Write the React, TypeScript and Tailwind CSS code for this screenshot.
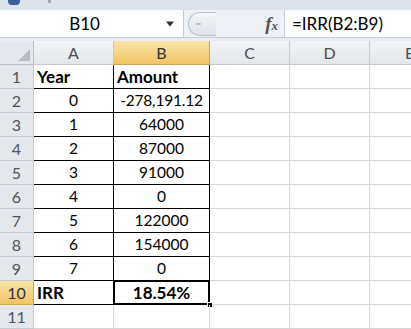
import React from 'react';

const cols = [
  { key: 'A', w: 'w-[80px]' },
  { key: 'B', w: 'w-[96px]' },
  { key: 'C', w: 'w-[80px]' },
  { key: 'D', w: 'w-[80px]' },
  { key: 'E', w: 'w-[80px]' },
];

const data: [string, string][] = [
  ['Year', 'Amount'],
  ['0', '-278,191.12'],
  ['1', '64000'],
  ['2', '87000'],
  ['3', '91000'],
  ['4', '0'],
  ['5', '122000'],
  ['6', '154000'],
  ['7', '0'],
  ['IRR', '18.54%'],
  ['', ''],
];

function FxIcon() {
  return (
    <span className="italic font-bold text-[19px] text-[#555] leading-none" style={{ fontFamily: '"Liberation Serif", serif' }}>
      f<span className="text-[13px]">x</span>
    </span>
  );
}

export default function App() {
  return (
    <div className="w-[411px] h-[329px] overflow-hidden bg-white text-black" style={{ fontFamily: 'Lato, "Open Sans", sans-serif' }}>
      {/* ribbon leftover */}
      <div className="h-[10px] bg-[#dde3ea] flex items-start pl-[8px]">
        <div className="w-[12px] h-[5px] bg-[#3b5f9c] rounded-b-sm" />
        <div className="ml-[28px] w-[3px] h-[3px] bg-[#9aa6b6]" />
      </div>

      {/* formula bar */}
      <div className="h-[28px] flex bg-[#e9edf2] border-b border-[#c6ccd4]">
        <div className="w-[184px] bg-white flex items-center border-r border-[#c6ccd4]">
          <div className="flex-1 text-center text-[17px] pl-[4px]">B10</div>
          <svg width="10" height="6" viewBox="0 0 10 6" className="mr-[8px]">
            <path d="M1 0.5 L9 0.5 L5 5.5 Z" fill="#333" />
          </svg>
        </div>
        <div className="w-[100px] flex items-center pl-[4px] pr-[6px] bg-[#eef1f5]">
          <div className="h-[24px] w-[28px] rounded-l-full border border-r-0 border-[#b9c0c9] bg-gradient-to-b from-[#f4f6f8] to-[#dde2e8] flex items-center pl-[7px]">
            <div className="w-[5px] h-[2px] bg-[#b8c0ca] rounded" />
          </div>
          <div className="flex-1" />
          <FxIcon />
        </div>
        <div className="flex-1 bg-white flex items-center pl-[7px] text-[17px] border-l border-[#c6ccd4]">
          =IRR(B2:B9)
        </div>
      </div>

      <div className="h-[3px] bg-[#e9edf2]" />

      {/* sheet */}
      <div className="flex flex-col">
        <div className="flex h-[24px]">
          <div className="w-[34px] shrink-0 bg-[#e4e7eb] border-r border-b border-[#b9bec5] flex items-end justify-end p-[3px]">
            <svg width="12" height="12" viewBox="0 0 12 12">
              <path d="M12 0 L12 12 L0 12 Z" fill="#b7bcc2" />
            </svg>
          </div>
          {cols.map((c) => (
            <div
              key={c.key}
              className={`${c.w} shrink-0 flex items-center justify-center text-[16px] border-r border-b ${
                c.key === 'B'
                  ? 'bg-gradient-to-b from-[#fbe3a8] to-[#f2c462] border-[#c9a556] text-[#333]'
                  : 'bg-gradient-to-b from-[#f3f5f7] to-[#e3e6ea] border-[#c5cad1] text-[#4b4f55]'
              }`}
            >
              {c.key}
            </div>
          ))}
        </div>

        {data.map(([a, b], i) => {
          const row = i + 1;
          const inTable = row <= 10;
          const header = row === 1;
          const irr = row === 10;
          return (
            <div key={row} className="flex h-[24px]">
              <div
                className={`w-[34px] shrink-0 flex items-center justify-center text-[16px] border-r border-b ${
                  irr
                    ? 'bg-gradient-to-b from-[#fbe3a8] to-[#f2c462] border-[#c9a556] text-[#333]'
                    : 'bg-[#e4e7eb] border-[#c5cad1] text-[#4f545a]'
                }`}
              >
                {row}
              </div>
              <div
                className={`w-[80px] shrink-0 flex items-center border-r border-b ${
                  inTable ? 'border-black' : 'border-[#d6d6d6]'
                } ${header || irr ? 'font-bold pl-[3px] text-[17px]' : 'justify-center text-[15.5px]'}`}
              >
                {a}
              </div>
              <div
                className={`relative w-[96px] shrink-0 flex items-center border-r border-b ${
                  inTable ? 'border-black' : 'border-[#d6d6d6]'
                } ${header ? 'font-bold pl-[3px] text-[17px]' : 'justify-center text-[15.5px]'} ${irr ? 'font-bold text-[17px]' : ''}`}
              >
                <span className={b.startsWith('-') ? 'tracking-[-0.2px]' : ''}>{b}</span>
                {irr && (
                  <>
                    <div className="absolute -left-[1px] -top-[1px] -right-[1px] -bottom-[1px] border-2 border-black" />
                    <div className="absolute -right-[4px] -bottom-[4px] w-[6px] h-[6px] bg-black border border-white" />
                  </>
                )}
              </div>
              <div className="w-[80px] shrink-0 border-r border-b border-[#d6d6d6]" />
              <div className="w-[80px] shrink-0 border-r border-b border-[#d6d6d6]" />
              <div className="w-[80px] shrink-0 border-b border-[#d6d6d6]" />
            </div>
          );
        })}
      </div>
    </div>
  );
}
